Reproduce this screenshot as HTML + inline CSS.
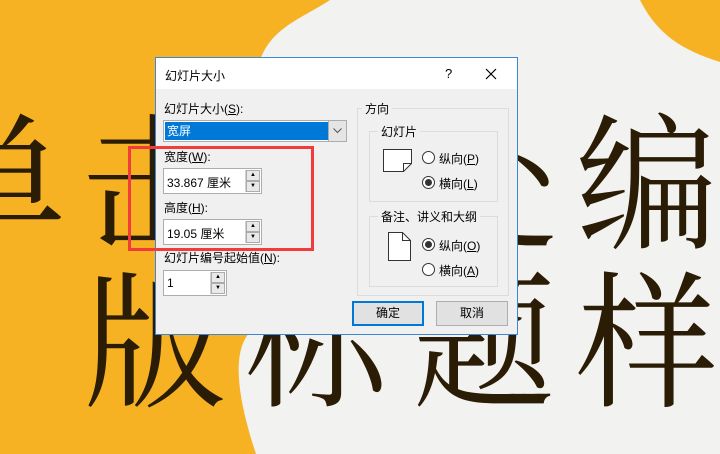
<!DOCTYPE html>
<html><head><meta charset="utf-8"><style>
*{margin:0;padding:0;box-sizing:border-box}
html,body{width:720px;height:454px;overflow:hidden}
body{position:relative;background:#F6B223;font-family:"Liberation Sans","Microsoft YaHei","Noto Sans CJK SC",sans-serif;font-size:12px;color:#000}
#wrap{position:absolute;left:0;top:0;width:720px;height:454px;overflow:hidden}
.big{position:absolute;font-family:"Noto Serif CJK SC",serif;font-size:142px;line-height:1;color:#2B1D05;transform:scaleY(1.04);transform-origin:top left}
.abs{position:absolute}
.lbl{position:absolute;font-size:12px;color:#000;white-space:nowrap}
.field{position:absolute;background:#fff;border:1px solid #ADADAD}
.spin{position:absolute;right:1px;top:1px;bottom:1px;width:15px;border-left:1px solid #d0d0d0}
.spin div{height:50%;background:#E9E9E9;border:1px solid #ACACAC;font-size:6px;text-align:center;line-height:9px;color:#000}
.grp{position:absolute;border:1px solid #DCDCDC}
.gl{position:absolute;top:-9px;left:8px;background:#F0F0F0;padding:0 3px;font-size:12px}
.radio{position:absolute;width:13px;height:13px;border:1px solid #333;border-radius:50%;background:#fff}
.radio.on::after{content:"";position:absolute;left:2px;top:2px;width:7px;height:7px;border-radius:50%;background:#333}
.btn{position:absolute;background:#E1E1E1;border:1px solid #ADADAD;text-align:center;line-height:22px;font-size:12px}
u{text-decoration:underline}
</style></head><body><div id="wrap">
<svg class="abs" style="left:0;top:0" width="720" height="454">
<path d="M330 0 C300 20 262 30 257 75 L252 330 C230 350 238 400 256 454 L720 454 L720 62 C690 52 660 40 640 0 Z" fill="#F2F2F0"/>
</svg>
<div class="big" style="left:-76px;top:100px">单</div>
<div class="big" style="left:82px;top:100px">击</div>
<div class="big" style="left:415px;top:100px">处</div>
<div class="big" style="left:576px;top:100px">编</div>
<div class="big" style="left:84px;top:258px">版</div>
<div class="big" style="left:245px;top:258px">标</div>
<div class="big" style="left:413px;top:258px">题</div>
<div class="big" style="left:576px;top:258px">样</div>

<div class="abs" style="left:155px;top:57px;width:363px;height:278px;background:#F0F0F0;border:1px solid #3C86D8">
 <div class="abs" style="left:0;top:0;width:361px;height:31px;background:#fff"></div>
 <div class="lbl" style="left:9px;top:9px">幻灯片大小</div>
 <div class="lbl" style="left:289px;top:8px;font-size:13px">?</div>
 <svg class="abs" style="left:329px;top:10px" width="12" height="12"><path d="M1 1L11 11M11 1L1 11" stroke="#000" stroke-width="1.2"/></svg>

 <div class="lbl" style="left:8px;top:42px">幻灯片大小(<u>S</u>):</div>
 <div class="abs" style="left:7px;top:62px;width:184px;height:22px;background:#fff;border:1px solid #ADADAD">
  <div class="abs" style="left:1px;top:1px;width:163px;height:18px;background:#0078D7;color:#fff;padding-left:2px;line-height:18px">宽屏</div>
  <div class="abs" style="right:0;top:0;width:18px;height:20px;background:#E5E5E5;border-left:1px solid #ADADAD"></div>
  <svg class="abs" style="right:4px;top:7px" width="9" height="6"><path d="M0.5 0.5L4.5 4.5L8.5 0.5" stroke="#555" fill="none"/></svg>
 </div>
 <div class="lbl" style="left:8px;top:90px">宽度(<u>W</u>):</div>
 <div class="field" style="left:7px;top:110px;width:99px;height:26px"><span class="abs" style="left:3px;top:5px">33.867 厘米</span><div class="spin"><div>▲</div><div>▼</div></div></div>
 <div class="lbl" style="left:8px;top:141px">高度(<u>H</u>):</div>
 <div class="field" style="left:7px;top:161px;width:99px;height:26px"><span class="abs" style="left:3px;top:5px">19.05 厘米</span><div class="spin"><div>▲</div><div>▼</div></div></div>
 <div class="lbl" style="left:8px;top:191px">幻灯片编号起始值(<u>N</u>):</div>
 <div class="field" style="left:7px;top:212px;width:64px;height:26px"><span class="abs" style="left:3px;top:5px">1</span><div class="spin"><div>▲</div><div>▼</div></div></div>

 <div class="grp" style="left:201px;top:50px;width:152px;height:188px"><span class="gl" style="left:4px">方向</span>
  <div class="grp" style="left:11px;top:22px;width:129px;height:71px"><span class="gl">幻灯片</span>
   <svg class="abs" style="left:13px;top:17px" width="30" height="24"><path d="M0.5 0.5H28.5V14.5L20.5 22.5H0.5Z" fill="#fff" stroke="#333"/><path d="M28.5 14.5H20.5V22.5" fill="none" stroke="#333"/></svg>
   <div class="radio" style="left:52px;top:19px"></div><span class="lbl" style="left:69px;top:18px">纵向(<u>P</u>)</span>
   <div class="radio on" style="left:52px;top:44px"></div><span class="lbl" style="left:69px;top:43px">横向(<u>L</u>)</span>
  </div>
  <div class="grp" style="left:11px;top:107px;width:129px;height:71px"><span class="gl">备注、讲义和大纲</span>
   <svg class="abs" style="left:18px;top:15px" width="24" height="30"><path d="M0.5 0.5H14.5L22.5 8.5V28.5H0.5Z" fill="#fff" stroke="#333"/><path d="M14.5 0.5V8.5H22.5" fill="none" stroke="#333"/></svg>
   <div class="radio on" style="left:52px;top:21px"></div><span class="lbl" style="left:69px;top:20px">纵向(<u>O</u>)</span>
   <div class="radio" style="left:52px;top:46px"></div><span class="lbl" style="left:69px;top:45px">横向(<u>A</u>)</span>
  </div>
 </div>
 <div class="btn" style="left:196px;top:243px;width:72px;height:25px;border:2px solid #0078D7;line-height:21px">确定</div>
 <div class="btn" style="left:280px;top:243px;width:72px;height:25px">取消</div>
</div>
<div class="abs" style="left:128px;top:146px;width:186px;height:105px;border:3px solid #F23B3B"></div>
</div></body></html>
